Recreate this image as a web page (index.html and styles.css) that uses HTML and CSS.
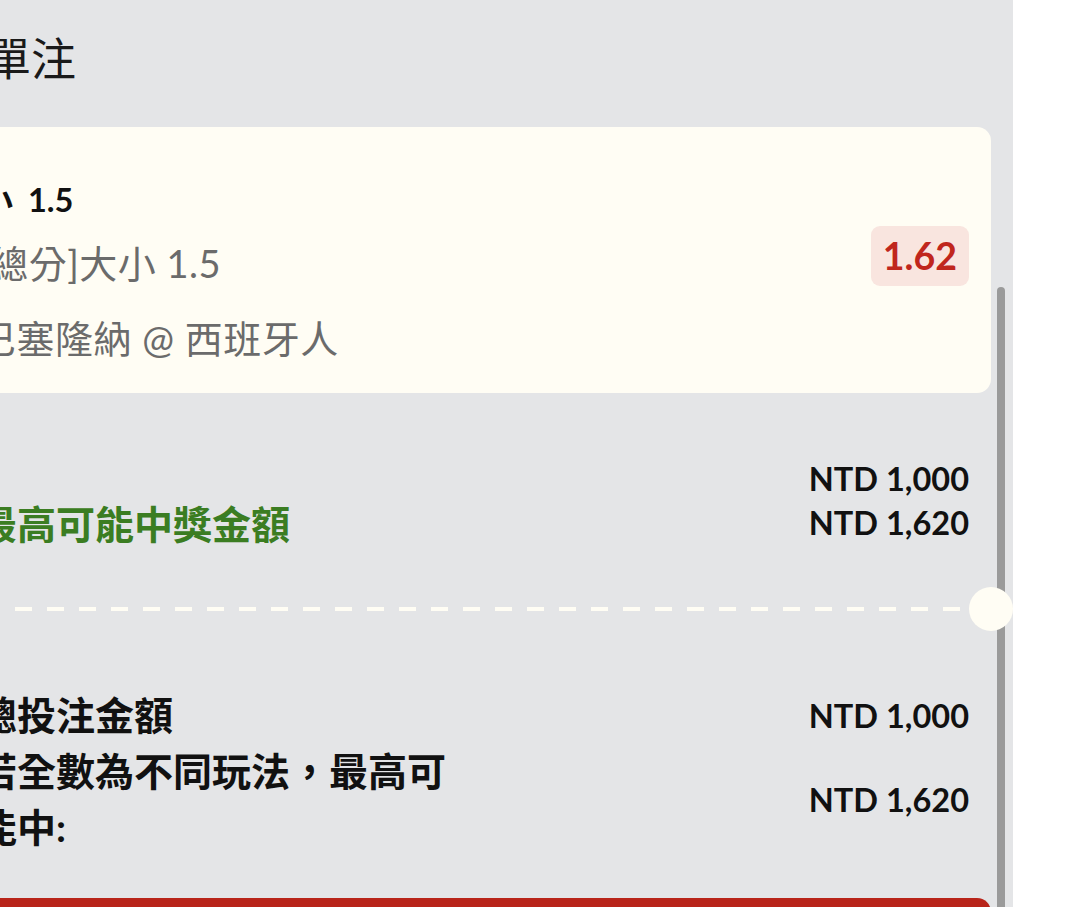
FILE: index.html
```html
<!DOCTYPE html>
<html lang="zh-Hant">
<head>
  <meta charset="UTF-8">
  <meta name="viewport" content="width=device-width, initial-scale=1.0">
  <title>單注</title>
  <link rel="stylesheet" href="styles.css">
</head>
<body>
  <div class="panel">
    <div class="sheet">
      <h1 class="title">單注</h1>

      <div class="bet-card">
        <div class="bet-info">
          <div class="sel-name">大小 1.5</div>
          <div class="market">[總分]大小 1.5</div>
          <div class="match">巴塞隆納 @ 西班牙人</div>
        </div>
        <div class="odds">1.62</div>
      </div>

      <div class="summary">
        <div class="row">
          <span class="label"></span>
          <span class="amount">NTD 1,000</span>
        </div>
        <div class="row">
          <span class="label win">最高可能中獎金額</span>
          <span class="amount">NTD 1,620</span>
        </div>
      </div>

      <div class="divider"></div>

      <div class="totals">
        <div class="row">
          <span class="label">總投注金額</span>
          <span class="amount">NTD 1,000</span>
        </div>
        <div class="row">
          <span class="label wrap">若全數為不同玩法，最高可能中:</span>
          <span class="amount">NTD 1,620</span>
        </div>
      </div>

      <button class="place-bet">確認投注</button>
    </div>

    <div class="scroll-track">
      <div class="scroll-thumb"></div>
    </div>
  </div>
</body>
</html>
```

FILE: styles.css
```css
html, body {
  margin: 0;
  padding: 0;
  background: #ffffff;
}
body {
  font-family: Lato, "Noto Sans CJK TC", sans-serif;
  color: #111;
}
.panel {
  width: 1013px;
  height: 907px;
  background: #e4e5e7;
  display: flex;
  overflow: hidden;
  position: relative;
}
.sheet {
  width: 1035px;
  margin-left: -44px;
  flex-shrink: 0;
}
.title {
  margin: 29px 0 38px 30px;
  font-size: 45px;
  line-height: 60px;
  font-weight: 400;
  color: #1a1a1a;
}
.bet-card {
  background: #fffdf4;
  border-radius: 14px;
  height: 266px;
  box-sizing: border-box;
  padding: 51px 22px 0 22px;
  display: flex;
  justify-content: space-between;
  align-items: flex-start;
}
.sel-name {
  font-size: 32.5px;
  line-height: 44px;
  font-weight: 700;
  word-spacing: 7px;
  margin-left: -30px;
}
.market, .match {
  font-size: 38px;
  line-height: 50px;
  letter-spacing: 0.5px;
  color: #6b6b6b;
}
.market {
  margin-top: 16px;
}
.match {
  margin-top: 25px;
}
.odds {
  margin-top: 48px;
  background: #f9e5df;
  color: #c0261d;
  font-weight: 700;
  font-size: 37.5px;
  line-height: 60px;
  padding: 0 12px;
  border-radius: 9px;
}
.summary {
  padding: 63px 22px 0 22px;
}
.row {
  display: flex;
  justify-content: space-between;
  align-items: center;
}
.summary .row {
  height: 44px;
}
.label {
  font-size: 39px;
  font-weight: 700;
}
.label.win {
  color: #3b7d22;
}
.amount {
  font-size: 32.5px;
  font-weight: 700;
  white-space: nowrap;
}
.divider {
  position: relative;
  height: 4px;
  margin: 63px 0 0 0;
}
.divider::before {
  content: "";
  display: block;
  height: 4px;
  margin: 0 28px 0 59px;
  background: repeating-linear-gradient(90deg, #fffdf4 0 17px, transparent 17px 32px);
}
.divider::after {
  content: "";
  position: absolute;
  right: -22px;
  top: -20px;
  width: 44px;
  height: 44px;
  border-radius: 50%;
  background: #fffdf4;
}
.totals {
  padding: 76px 22px 0 22px;
}
.totals .label {
  line-height: 56px;
}
.label.wrap {
  max-width: 480px;
}
.place-bet {
  display: block;
  width: 100%;
  height: 110px;
  margin-top: 43px;
  border: none;
  border-radius: 14px;
  background: #b8241a;
  color: #fff;
  font-family: inherit;
  font-size: 37.5px;
  font-weight: 700;
}
.scroll-track {
  width: 22px;
  flex-shrink: 0;
}
.scroll-thumb {
  width: 8px;
  margin: 287px 0 0 6px;
  height: 700px;
  border-radius: 4px;
  background: #9a9a9a;
}
```
